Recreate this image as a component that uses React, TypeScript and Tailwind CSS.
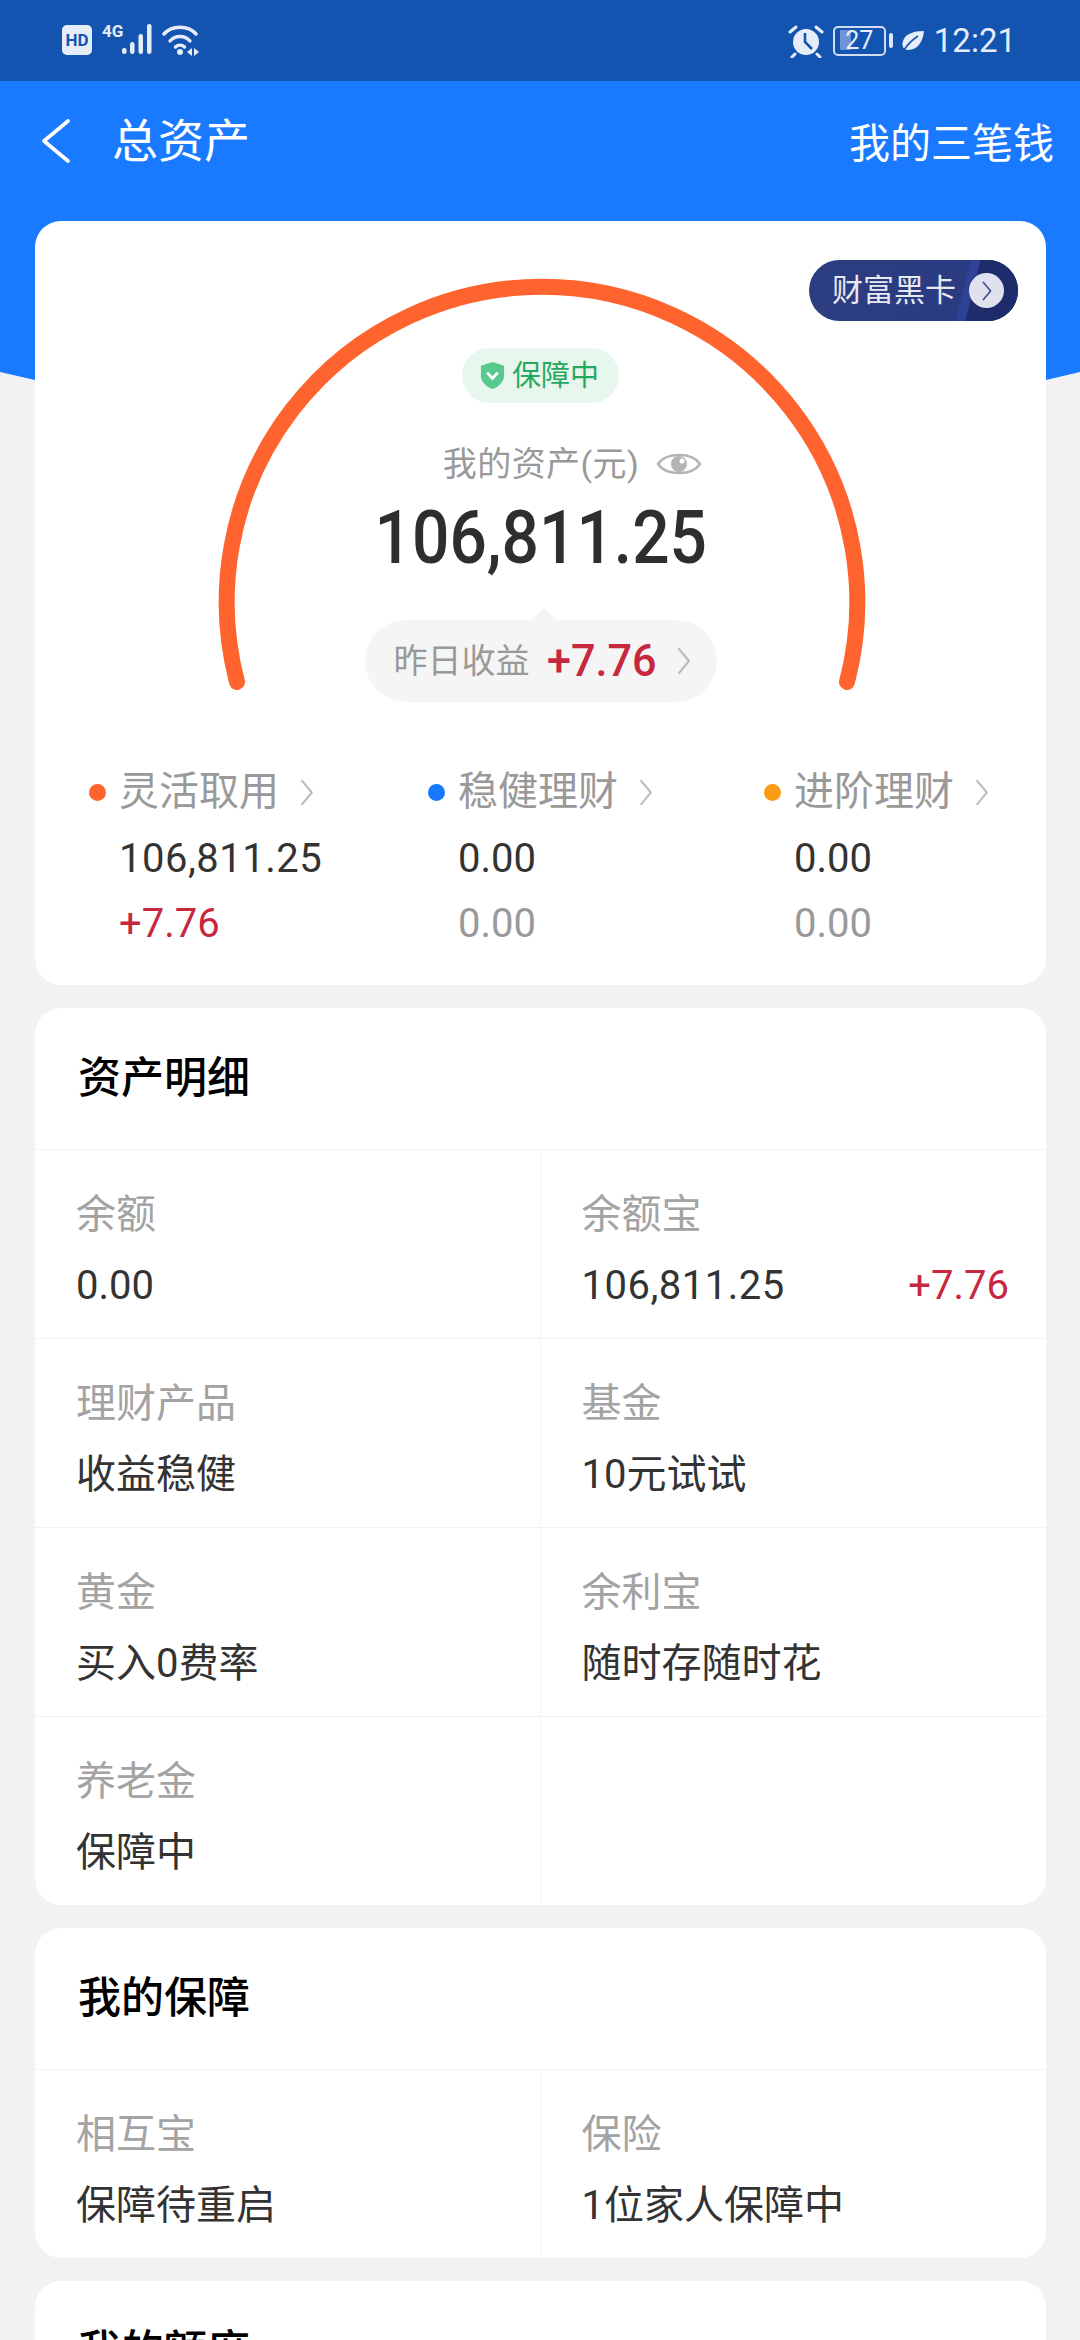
import React from "react";

const CJK = "font-['Roboto','Noto_Sans_CJK_SC',sans-serif]";

function Chevron({ className = "" }: { className?: string }) {
  return (
    <svg viewBox="0 0 16 28" className={className} fill="none" stroke="currentColor" strokeWidth="2.2" strokeLinecap="round" strokeLinejoin="round">
      <path d="M3 2 L13 14 L3 26" />
    </svg>
  );
}

function StatusBar() {
  return (
    <div className="h-[81px] bg-[#1254b0] flex items-center justify-between pl-[62px] pr-[64px] text-[#e6edf8]">
      <div className="flex items-start">
        <div className="w-[30px] h-[30px] rounded-[5px] bg-[#e6edf8] text-[#1254b0] text-[17px] leading-[30px] font-bold text-center font-['Roboto',sans-serif]">HD</div>
        <svg width="51" height="38" viewBox="0 -6 51 38" className="ml-[10px] -mt-[7px]" fill="currentColor">
          <text x="0" y="13" fontSize="17" fontWeight="700" fontFamily="Roboto">4G</text>
          <rect x="20" y="24" width="4.500" height="6" rx="2.200" />
          <rect x="28" y="18" width="4.500" height="12" rx="2.200" />
          <rect x="36.500" y="10" width="4.500" height="20" rx="2.200" />
          <rect x="45" y="0" width="4.500" height="30" rx="2.200" />
        </svg>
        <svg width="38" height="34" viewBox="0 0 38 34" className="ml-[9px] -mt-[2px]" fill="none" stroke="currentColor" strokeWidth="3.400" strokeLinecap="round">
          <path d="M2 11 C10 2 26 2 34 11" />
          <path d="M8 18 C13 12 23 12 28 18" />
          <path d="M13.500 24 C16 21.500 20 21.500 22.500 24" />
          <circle cx="18" cy="29" r="3" fill="currentColor" stroke="none" />
          <path d="M30 25 L25 29 L30 33 Z M32 25 L37 29 L32 33 Z" fill="currentColor" stroke="none" />
        </svg>
      </div>
      <div className="flex items-center">
        <svg width="36" height="34" viewBox="0 0 36 34" fill="none">
          <circle cx="18" cy="18" r="13" fill="currentColor" />
          <path d="M17 9 V18 L24 25" stroke="#1254b0" strokeWidth="2.600" />
          <path d="M2 8 L8 3 M34 8 L28 3 M7 30 L4 33 M29 30 L32 33" stroke="currentColor" strokeWidth="3" strokeLinecap="round" />
        </svg>
        <div className="relative ml-[9px] w-[53px] h-[30px] rounded-[5px] border-[2.5px] border-[#cfdcf2] text-[25px] leading-[25px] text-center font-['Roboto',sans-serif]">
          <div className="absolute left-[5px] top-[2px] w-[11px] h-[20px] bg-[#6f93d6] rounded-[1px]"></div>
          <span className="relative">27</span>
        </div>
        <div className="ml-[3px] w-[4px] h-[15px] rounded-[2px] bg-[#dbe5f5]"></div>
        <svg width="24" height="22" viewBox="0 0 24 22" className="ml-[8px]">
          <path d="M23 1 C12 1 3 4 1.500 13 C1 17 3 20 7 20 C17 20 22 11 23 1 Z" fill="currentColor" />
          <path d="M3 20 C7 14 11 10 17 6" stroke="#1254b0" strokeWidth="1.600" fill="none" />
        </svg>
        <span className="ml-[9px] text-[33px] leading-[40px] font-['Roboto',sans-serif]">12:21</span>
      </div>
    </div>
  );
}

function Nav() {
  return (
    <div className={`h-[120px] flex items-center justify-between pl-[41px] pr-[26px] text-white ${CJK}`}>
      <div className="flex items-center">
        <svg viewBox="0 0 30 44" className="w-[30px] h-[44px]" fill="none" stroke="currentColor" strokeWidth="3.600" strokeLinecap="round" strokeLinejoin="round">
          <path d="M27 2 L3 22 L27 42" />
        </svg>
        <span className="ml-[41px] text-[46px] leading-[62px]">总资产</span>
      </div>
      <span className="text-[41px] leading-[60px] mt-[6px]">我的三笔钱</span>
    </div>
  );
}

function Gauge() {
  return (
    <svg className="absolute left-[176px] top-[50px] w-[662px] h-[430px]" viewBox="0 0 662 430" fill="none">
      <path d="M26 411 A315.300 315.300 0 1 1 636 411" stroke="#ff642e" strokeWidth="16" strokeLinecap="round" />
    </svg>
  );
}

function BlackCard() {
  return (
    <div className="absolute right-[28px] top-[39px] w-[209px] h-[61px] rounded-full overflow-hidden bg-gradient-to-r from-[#2c3d80] to-[#2a3a82] flex items-center pl-[23px]">
      <div className="absolute left-[154px] top-0 h-full w-[80px] bg-[#2e4196] skew-x-[-14deg]"></div>
      <div className="absolute left-[164px] top-0 h-full w-[80px] bg-[#1f2c6b] skew-x-[-14deg]"></div>
      <span className="relative text-[31px] leading-[40px] text-[#e6e8f2]">财富黑卡</span>
      <div className="relative ml-[13px] w-[35px] h-[35px] rounded-full bg-[#dfe1ee] text-[#3a4a8c] flex items-center justify-center">
        <Chevron className="w-[12px] h-[20px]" />
      </div>
    </div>
  );
}

function Summary({ dot, title, value, income, incomeColor, valueClass = "" }: { dot: string; title: string; value: string; income: string; incomeColor: string; valueClass?: string }) {
  return (
    <div className="min-w-0">
      <div className="flex items-center h-[56px]">
        <span className={`w-[17px] h-[17px] rounded-full shrink-0 ${dot}`}></span>
        <span className="ml-[13px] text-[40px] leading-[56px] text-[#999999]">{title}</span>
        <Chevron className="ml-[20px] w-[16px] h-[27px] text-[#bcbcbc]" />
      </div>
      <div className={`pl-[30px] mt-[11px] text-[40px] leading-[56px] text-[#333333] ${valueClass}`}>{value}</div>
      <div className={`pl-[30px] mt-[9px] text-[40px] leading-[56px] ${incomeColor}`}>{income}</div>
    </div>
  );
}

type CellData = { label?: string; value?: string; extra?: string; valueClass?: string };

function Cell({ label, value, extra, valueClass = "", borderRight }: CellData & { borderRight?: boolean }) {
  return (
    <div className={`h-[189px] pt-[37px] pl-[41px] pr-[37px] border-t border-[#f2f2f2] ${borderRight ? "border-r" : ""}`}>
      {label && <div className="text-[40px] leading-[56px] text-[#a3a3a3]">{label}</div>}
      {value && (
        <div className="mt-[15px] flex justify-between text-[40px] leading-[56px] text-[#333333]">
          <span className={valueClass}>{value}</span>
          {extra && <span className="text-[#c8283f]">{extra}</span>}
        </div>
      )}
    </div>
  );
}

function Section({ title, cells }: { title: string; cells: CellData[] }) {
  return (
    <div className="bg-white rounded-[26px] overflow-hidden">
      <div className="h-[141px] pl-[43px] flex items-center font-medium text-[43px] text-black">{title}</div>
      <div className="grid grid-cols-2">
        {cells.map((c, i) => (
          <Cell key={i} {...c} borderRight={i % 2 === 0} />
        ))}
      </div>
    </div>
  );
}

export default function App() {
  return (
    <div className={`w-[1080px] h-[2340px] overflow-hidden bg-[#f2f2f2] ${CJK}`}>
      <div className="h-[385px] bg-[#1a7aff] [clip-path:polygon(0_0,100%_0,100%_372px,1046px_380px,35px_380px,0_372px)]">
        <StatusBar />
        <Nav />
      </div>
      <div className="-mt-[164px] pl-[35px] pr-[34px] flex flex-col gap-[23px]">
        <div className="relative bg-white rounded-[26px] h-[764px] pt-[127px]">
          <Gauge />
          <BlackCard />
          <div className="relative flex flex-col items-center">
            <div className="w-[157px] h-[55px] rounded-full bg-[#e8f7ee] flex items-center pl-[17px]">
              <svg viewBox="0 0 28 30" className="w-[27px] h-[29px]">
                <path d="M14 1 L26 5 V15 C26 22 20 27 14 29 C8 27 2 22 2 15 V5 Z" fill="#58c98c" />
                <path d="M8.500 12 L14 18 L19.500 12" stroke="#ffffff" strokeWidth="3" fill="none" />
              </svg>
              <span className="ml-[6px] text-[29px] leading-[40px] text-[#27a85f]">保障中</span>
            </div>
            <div className="mt-[37px] flex items-center h-[48px] ml-[64px]">
              <span className="text-[34px] leading-[48px] tracking-[0.4px] text-[#999999]">我的资产(元)</span>
              <svg viewBox="0 0 46 32" className="ml-[17px] w-[46px] h-[32px]" fill="none">
                <path d="M2 16 C10 4 36 4 44 16 C36 28 10 28 2 16 Z" stroke="#b4b4b4" strokeWidth="2.600" />
                <circle cx="23" cy="16" r="8" fill="#b4b4b4" />
                <circle cx="26" cy="13" r="2.500" fill="#ffffff" />
              </svg>
            </div>
            <div className="mt-[10px] h-[80px] text-[74px] leading-[80px] font-medium text-[#2e2e2e] scale-x-[0.89]">106,811.25</div>
            <div className="relative mt-[42px] w-[352px] h-[82px] rounded-full bg-[#f5f5f5] flex items-center pl-[29px]">
              <div className="absolute left-[169px] -top-[8px] w-[20px] h-[20px] rotate-45 bg-[#f5f5f5]"></div>
              <span className="relative text-[34px] leading-[48px] text-[#999999]">昨日收益</span>
              <span className="relative ml-[17px] text-[45px] leading-[56px] font-medium text-[#c8283f] scale-x-[0.96] origin-left w-[118px]">+7.76</span>
              <Chevron className="relative ml-[11px] w-[16px] h-[28px] text-[#bcbcbc]" />
            </div>
            <div className="mt-[62px] w-full pl-[54px] grid grid-cols-[339px_336px_1fr]">
              <Summary dot="bg-[#ff642e]" title="灵活取用" value="106,811.25" valueClass="tracking-[0.5px]" income="+7.76" incomeColor="text-[#c8283f]" />
              <Summary dot="bg-[#1677ff]" title="稳健理财" value="0.00" income="0.00" incomeColor="text-[#999999]" />
              <Summary dot="bg-[#fa9d14]" title="进阶理财" value="0.00" income="0.00" incomeColor="text-[#999999]" />
            </div>
          </div>
        </div>
        <Section
          title="资产明细"
          cells={[
            { label: "余额", value: "0.00" },
            { label: "余额宝", value: "106,811.25", valueClass: "tracking-[0.5px]", extra: "+7.76" },
            { label: "理财产品", value: "收益稳健" },
            { label: "基金", value: "10元试试" },
            { label: "黄金", value: "买入0费率" },
            { label: "余利宝", value: "随时存随时花" },
            { label: "养老金", value: "保障中" },
            {},
          ]}
        />
        <Section
          title="我的保障"
          cells={[
            { label: "相互宝", value: "保障待重启" },
            { label: "保险", value: "1位家人保障中" },
          ]}
        />
        <div className="bg-white rounded-[26px] h-[200px]">
          <div className="h-[141px] pl-[43px] flex items-center font-medium text-[43px] text-black">我的额度</div>
        </div>
      </div>
    </div>
  );
}
